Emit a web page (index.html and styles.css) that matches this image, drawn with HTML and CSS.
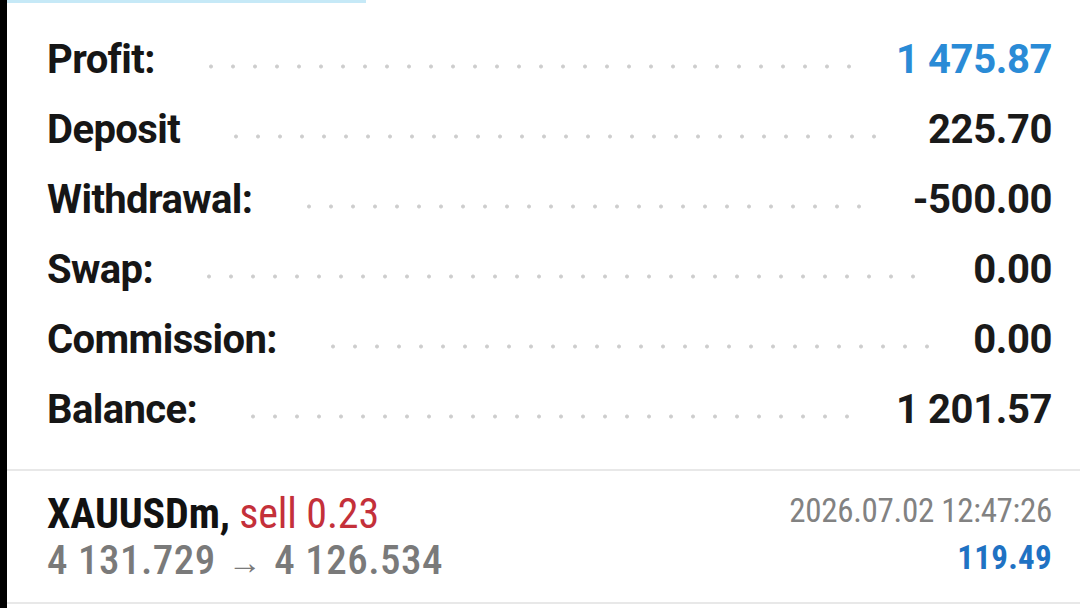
FILE: index.html
```html
<!DOCTYPE html>
<html lang="en">
<head>
<meta charset="utf-8">
<title>History</title>
<link rel="stylesheet" href="styles.css">
</head>
<body>
<div class="screen">
  <div class="tab-indicator"></div>

  <section class="summary">
    <div class="row">
      <span class="label">Profit:</span>
      <span class="leader"></span>
      <span class="value value-profit">1 475.87</span>
    </div>
    <div class="row">
      <span class="label">Deposit</span>
      <span class="leader"></span>
      <span class="value">225.70</span>
    </div>
    <div class="row">
      <span class="label">Withdrawal:</span>
      <span class="leader"></span>
      <span class="value">-500.00</span>
    </div>
    <div class="row">
      <span class="label">Swap:</span>
      <span class="leader"></span>
      <span class="value">0.00</span>
    </div>
    <div class="row">
      <span class="label">Commission:</span>
      <span class="leader"></span>
      <span class="value">0.00</span>
    </div>
    <div class="row">
      <span class="label">Balance:</span>
      <span class="leader"></span>
      <span class="value">1 201.57</span>
    </div>
  </section>

  <section class="trade">
    <div class="trade-main">
      <div class="trade-title"><span class="symbol">XAUUSDm,</span> <span class="side">sell 0.23</span></div>
      <div class="trade-prices">4 131.729 <span class="arrow">→</span> 4 126.534</div>
    </div>
    <div class="trade-side">
      <div class="trade-time">2026.07.02 12:47:26</div>
      <div class="trade-result">119.49</div>
    </div>
  </section>
</div>
</body>
</html>
```

FILE: styles.css
```css
* {
  box-sizing: border-box;
}

html,
body {
  margin: 0;
  padding: 0;
  background: #ffffff;
}

body {
  font-family: Roboto, "Noto Sans", "Liberation Sans", sans-serif;
  color: #161616;
  overflow: hidden;
}

.screen {
  min-height: 608px;
  border-left: 7px solid #000000;
  background: #ffffff;
}

.tab-indicator {
  width: 359px;
  height: 3px;
  background: #c6e9f7;
}

/* Account summary: label . . . . . value */
.summary {
  padding: 21px 28px 25px 40px;
}

.row {
  display: flex;
  align-items: center;
  height: 70px;
}

.label,
.value {
  font-size: 40px;
  font-weight: 700;
  white-space: nowrap;
}

.label {
  color: #161616;
  letter-spacing: -0.6px;
}

.value {
  color: #1a1a1a;
  letter-spacing: -0.4px;
}

.value-profit {
  color: #2a8bd6;
}

.leader {
  flex: 1;
  height: 5px;
  margin: 14px 40px 0 45px;
  background-image: radial-gradient(circle, #cbcbcb 0, #d0d0d0 1.5px, rgba(255, 255, 255, 0) 2.5px);
  background-size: 22px 5px;
  background-repeat: repeat-x;
  background-position: 0 0;
}

/* Closed position entry */
.trade {
  display: flex;
  justify-content: space-between;
  align-items: flex-start;
  border-top: 2px solid #e8e8e8;
  border-bottom: 2px solid #e8e8e8;
  padding: 16px 28px 16px 40px;
  white-space: nowrap;
}

.trade-main {
  padding-top: 3px;
  line-height: 47px;
  font-stretch: condensed;
}

.trade-title {
  font-size: 42px;
  letter-spacing: -0.15px;
}

.symbol {
  font-weight: 700;
  color: #121212;
}

.side {
  color: #c4303a;
}

.trade-prices {
  font-size: 41px;
  font-weight: 500;
  color: #7a7a7a;
  letter-spacing: 0.5px;
}

.arrow {
  font-size: 34px;
  font-weight: 400;
  display: inline-block;
  padding: 0 2px;
}

.trade-side {
  text-align: right;
  line-height: 47px;
  font-stretch: condensed;
}

.trade-time {
  font-size: 33px;
  color: #828282;
  letter-spacing: -0.3px;
}

.trade-result {
  font-size: 33px;
  font-weight: 700;
  color: #1f72c3;
  letter-spacing: 0.3px;
}
```
